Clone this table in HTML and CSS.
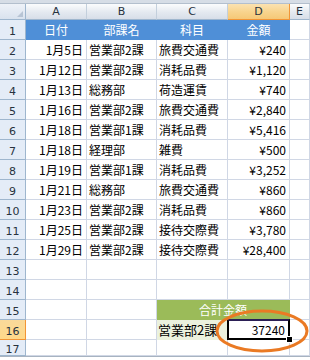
FILE: index.html
```html
<!DOCTYPE html>
<html lang="ja">
<head>
<meta charset="utf-8">
<link rel="stylesheet" href="styles.css">
</head>
<body>
<div class="topbar"></div>
<div class="sheet">
  <div class="corner"><span class="tri"></span></div>
  <div class="ch">A</div><div class="ch">B</div><div class="ch">C</div><div class="ch ch-sel">D</div><div class="ch">E</div>

  <div class="rh">1</div><div class="c hd">日付</div><div class="c hd">部課名</div><div class="c hd">科目</div><div class="c hd">金額</div><div class="c"></div>

  <div class="rh">2</div><div class="c r">1月5日</div><div class="c l">営業部2課</div><div class="c l">旅費交通費</div><div class="c r">¥240</div><div class="c"></div>
  <div class="rh">3</div><div class="c r">1月12日</div><div class="c l">営業部2課</div><div class="c l">消耗品費</div><div class="c r">¥1,120</div><div class="c"></div>
  <div class="rh">4</div><div class="c r">1月13日</div><div class="c l">総務部</div><div class="c l">荷造運賃</div><div class="c r">¥740</div><div class="c"></div>
  <div class="rh">5</div><div class="c r">1月16日</div><div class="c l">営業部2課</div><div class="c l">旅費交通費</div><div class="c r">¥2,840</div><div class="c"></div>
  <div class="rh">6</div><div class="c r">1月18日</div><div class="c l">営業部1課</div><div class="c l">消耗品費</div><div class="c r">¥5,416</div><div class="c"></div>
  <div class="rh">7</div><div class="c r">1月18日</div><div class="c l">経理部</div><div class="c l">雑費</div><div class="c r">¥500</div><div class="c"></div>
  <div class="rh">8</div><div class="c r">1月19日</div><div class="c l">営業部1課</div><div class="c l">消耗品費</div><div class="c r">¥3,252</div><div class="c"></div>
  <div class="rh">9</div><div class="c r">1月21日</div><div class="c l">総務部</div><div class="c l">旅費交通費</div><div class="c r">¥860</div><div class="c"></div>
  <div class="rh">10</div><div class="c r">1月23日</div><div class="c l">営業部2課</div><div class="c l">消耗品費</div><div class="c r">¥860</div><div class="c"></div>
  <div class="rh">11</div><div class="c r">1月25日</div><div class="c l">営業部2課</div><div class="c l">接待交際費</div><div class="c r">¥3,780</div><div class="c"></div>
  <div class="rh">12</div><div class="c r">1月29日</div><div class="c l">営業部2課</div><div class="c l">接待交際費</div><div class="c r">¥28,400</div><div class="c"></div>
  <div class="rh">13</div><div class="c"></div><div class="c"></div><div class="c"></div><div class="c"></div><div class="c"></div>
  <div class="rh">14</div><div class="c"></div><div class="c"></div><div class="c"></div><div class="c"></div><div class="c"></div>
  <div class="rh">15</div><div class="c"></div><div class="c"></div><div class="c sum-hd">合計金額</div><div class="c"></div>
  <div class="rh rh-sel">16</div><div class="c"></div><div class="c"></div><div class="c sum-lbl">営業部2課</div><div class="c r active">37240<span class="handle"></span></div><div class="c"></div>
  <div class="rh">17</div><div class="c"></div><div class="c"></div><div class="c"></div><div class="c"></div><div class="c"></div>

  <svg class="ring" width="96" height="46" viewBox="0 0 96 46"><ellipse cx="48" cy="23" rx="45" ry="20" fill="none" stroke="#ea7a24" stroke-width="3"/></svg>
</div>
</body>
</html>
```
FILE: styles.css
```css
html, body {
  margin: 0;
  padding: 0;
  background: #ffffff;
  width: 310px;
  height: 360px;
  overflow: hidden;
}
body {
  font-family: "Noto Sans CJK JP", "Liberation Sans", sans-serif;
  font-size: 12px;
  color: #000;
}
.topbar {
  height: 3px;
  background: #d6dde6;
  border-bottom: 1px solid #b3bfcd;
}
.sheet {
  position: relative;
  display: grid;
  grid-template-columns: 26px 61px 70px 71px 62px 20px;
  grid-template-rows: 16px repeat(16, 20px) 16px;
  border-bottom: 1px solid #a7b3c1;
}
.sheet > div {
  box-sizing: border-box;
  border-right: 1px solid #d0d7e5;
  border-bottom: 1px solid #d0d7e5;
  display: flex;
  align-items: center;
  white-space: nowrap;
  overflow: hidden;
  line-height: 1;
}
.sheet > .corner {
  background: linear-gradient(#eef2f8, #d9e2ee);
  border-right: 1px solid #9eb6ce;
  border-bottom: 1px solid #9eb6ce;
  position: relative;
}
.tri {
  position: absolute;
  right: 2px;
  bottom: 2px;
  width: 0;
  height: 0;
  border-left: 6px solid transparent;
  border-bottom: 6px solid #b7c4d4;
}
.sheet > .ch {
  background: linear-gradient(#fbfcfd, #e4e9f0 55%, #d7dee8);
  border-right: 1px solid #c3cfdc;
  border-bottom: 1px solid #9eb6ce;
  justify-content: center;
  font-family: "DejaVu Sans", "Liberation Sans", sans-serif;
  font-size: 11px;
  color: #27323e;
}
.sheet > .ch-sel {
  background: linear-gradient(#fbe2b1, #f8d38c 55%, #f5c877);
  border-right: 1px solid #f29536;
  border-bottom: 1px solid #f29536;
}
.sheet > .rh {
  background: #e4ecf7;
  border-right: 1px solid #9eb6ce;
  border-bottom: 1px solid #9eb6ce;
  justify-content: center;
  padding-top: 4px;
  font-family: "DejaVu Sans", "Liberation Sans", sans-serif;
  font-size: 11px;
  color: #27323e;
}
.sheet > .rh-sel {
  background: linear-gradient(#f9d99a, #ffd98a);
  border-right: 1px solid #f29536;
  border-bottom: 1px solid #f29536;
}
.c.r {
  justify-content: flex-end;
  padding-right: 3px;
}
.c.l {
  padding-left: 2px;
}
.sheet > .hd {
  background: #4f8fd7;
  border-right-color: #4f8fd7;
  border-bottom-color: #4f8fd7;
  color: #ffffff;
  justify-content: center;
  font-size: 12px;
}
.sheet > .sum-hd {
  grid-column: span 2;
  background: #9bbb59;
  border-right-color: #9bbb59;
  border-bottom-color: #9bbb59;
  color: #ffffff;
  justify-content: center;
  font-size: 12px;
}
.sheet > .sum-lbl {
  background: #ebf1de;
  border-right-color: #ebf1de;
  border-bottom-color: #ebf1de;
  padding-left: 1px;
  font-size: 13px;
}
.sheet > .active {
  position: relative;
  overflow: visible;
  border: 2px solid #000;
  border-top-color: #2b1f55;
  margin-left: -1px;
  margin-top: -1px;
  height: 21px;
}
.handle {
  position: absolute;
  right: -5px;
  bottom: -5px;
  width: 5px;
  height: 5px;
  background: #000;
  border: 1px solid #fff;
}
.ring {
  position: absolute;
  left: 214px;
  top: 304px;
}
```
